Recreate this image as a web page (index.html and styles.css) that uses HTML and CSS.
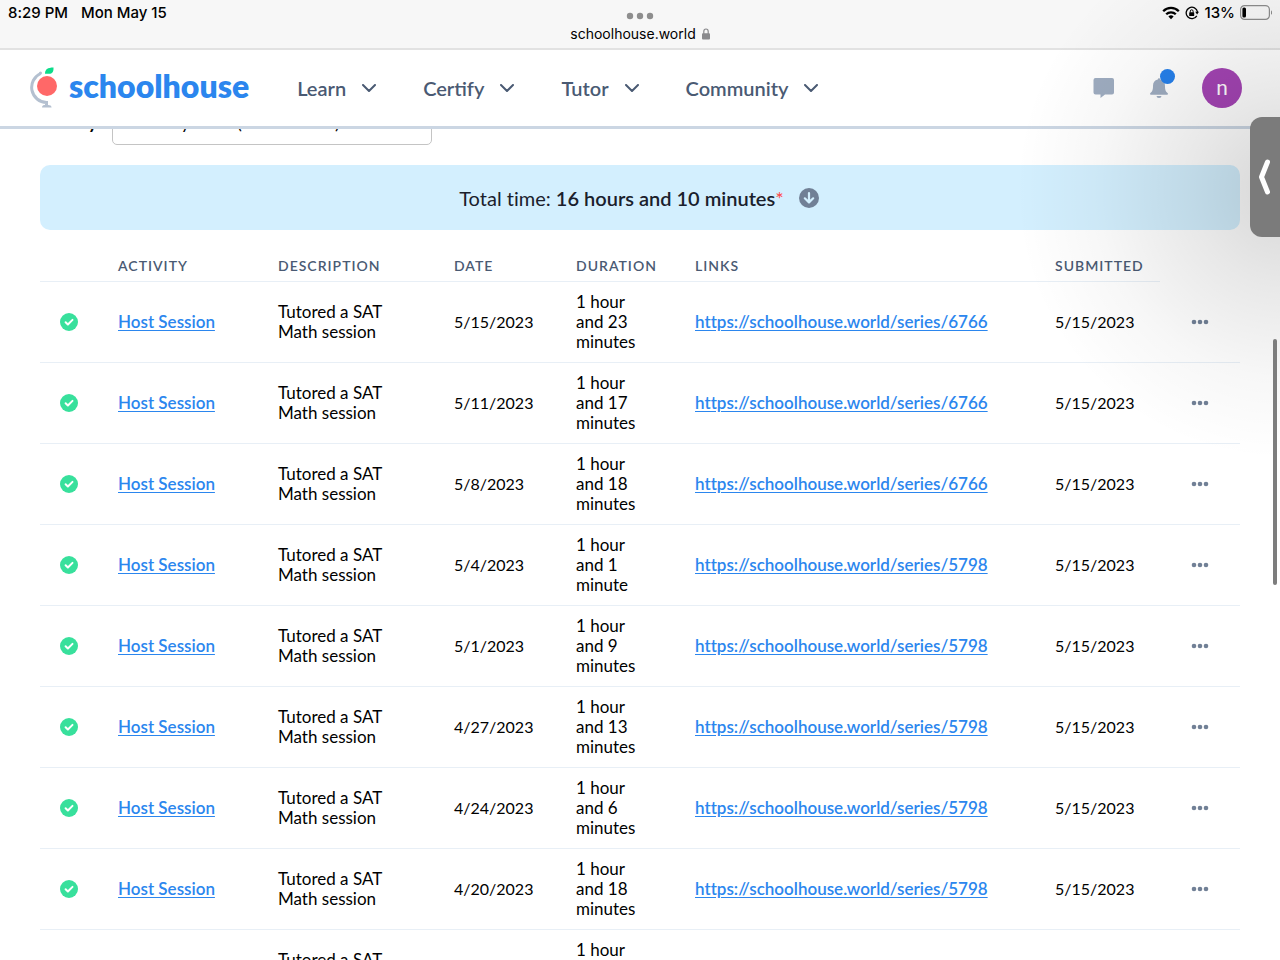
FILE: index.html
```html
<!DOCTYPE html>
<html lang="en">
<head>
    <meta charset="UTF-8">
    <meta name="viewport" content="width=device-width, initial-scale=1.0">
    <title>Schoolhouse - Transcript</title>
    <link rel="stylesheet" href="styles.css">
</head>
<body>
    <div class="status-bar">
        <div class="status-left"><span>8:29 PM</span><span>Mon May 15</span></div>
        <div class="status-center">
            <svg class="multitask" width="28" height="8" viewBox="0 0 28 8" fill="#8e8e8e"><circle cx="4" cy="4" r="3.2"/><circle cx="14" cy="4" r="3.2"/><circle cx="24" cy="4" r="3.2"/></svg>
            <div class="address">
                <span>schoolhouse.world</span>
                <svg width="8" height="12" viewBox="0 0 8 12"><path d="M1.8 6V3.4a2.2 2.4 0 0 1 4.4 0V6" fill="none" stroke="#8a8a8d" stroke-width="1.2"/><rect y="5.2" width="8" height="6.4" rx="1" fill="#8a8a8d"/></svg>
            </div>
        </div>
        <div class="status-right">
            <svg width="18" height="14" viewBox="0 0 18 14" fill="none" stroke="#000" stroke-width="2.3"><path d="M1.2 5.2a11 11 0 0 1 15.6 0"/><path d="M4.2 8.3a6.8 6.8 0 0 1 9.6 0"/><path d="M9 13.2L6.4 10.6a3.7 3.7 0 0 1 5.2 0z" fill="#000" stroke="none"/></svg>
            <svg width="14" height="14" viewBox="0 0 14 14"><path d="M11.8 9.800A5.700 5.700 0 1 1 12.500 6" fill="none" stroke="#000" stroke-width="1.3"/><path d="M10.2 5.8h3.8l-1.9 2.8z"/><rect x="4.2" y="6.3" width="5" height="3.8" rx=".6"/><path d="M5.3 6.6V5.2a1.4 1.4 0 0 1 2.8 0v1.4" fill="none" stroke="#000" stroke-width="1"/></svg>
            <span>13%</span>
            <svg width="32" height="15" viewBox="0 0 32 15"><rect x=".6" y=".6" width="28.8" height="13.8" rx="4" fill="none" stroke="#8d8d8d" stroke-width="1.2"/><rect x="2.4" y="2.4" width="3.6" height="10.2" rx="1.5"/><path d="M31 5.2c1.4.6 1.4 4 0 4.6z" fill="#8d8d8d"/></svg>
        </div>
    </div>

    <header class="navbar">
        <a class="logo" href="#">
            <svg width="28" height="42" viewBox="0 0 28 42">
                <path d="M10.500 6.500A15.200 15.200 0 0 0 16.500 35.500V39" fill="none" stroke="#b4c0d0" stroke-width="3"/>
                <circle cx="10.500" cy="6" r="1.500" fill="#b4c0d0"/>
                <path d="M12 40.500c0-2 1.500-2.500 3-2.500h3c2 0 3.600.8 3.600 2.500z" fill="#b4c0d0"/>
                <circle cx="17" cy="19" r="10" fill="#ff6868"/>
                <path d="M15 6.500C15 2.500 17.500.5 23.500.5c.2 4-1 6.300-4.500 6.300h-4z" fill="#0cdc8a"/>
            </svg>
            <span>schoolhouse</span>
        </a>
        <nav class="menu">
            <button class="menu-item">Learn <svg class="chevron" viewBox="0 0 14 8"><path d="M1 1l6 6 6-6"/></svg></button>
            <button class="menu-item">Certify <svg class="chevron" viewBox="0 0 14 8"><path d="M1 1l6 6 6-6"/></svg></button>
            <button class="menu-item">Tutor <svg class="chevron" viewBox="0 0 14 8"><path d="M1 1l6 6 6-6"/></svg></button>
            <button class="menu-item">Community <svg class="chevron" viewBox="0 0 14 8"><path d="M1 1l6 6 6-6"/></svg></button>
        </nav>
        <div class="user-actions">
            <button class="icon-btn" aria-label="Messages">
                <svg width="22" height="20" viewBox="0 0 22 20"><path d="M2.500 0h16.500a2 2 0 0 1 2 2v12.500a2 2 0 0 1-2 2h-7L7.500 20v-3.500h-5a2 2 0 0 1-2-2V2a2 2 0 0 1 2-2z" fill="#9eacc0"/></svg>
            </button>
            <button class="icon-btn" aria-label="Notifications">
                <svg width="18" height="20" viewBox="0 0 18 20" fill="#9eacc0"><path d="M7.800 1.500a1.200 1.200 0 0 1 2.400 0C13.500 2.200 15 4.500 15 8c0 4.500 1 5.700 2.600 7 .7.700.3 1.800-.6 1.800H1c-.9 0-1.300-1.100-.6-1.800C2 13.700 3 12.500 3 8c0-3.500 1.500-5.800 4.800-6.500z"/><path d="M6.500 18h5a2.500 2 0 0 1-5 0z"/></svg>
                <span class="badge"></span>
            </button>
            <button class="avatar">n</button>
        </div>
    </header>

    <main class="content">
        <div class="sort-row">
            <label for="sort">Sort by</label>
            <select id="sort" class="sort-select">
                <option>Activity Date (newest first)</option>
            </select>
        </div>

        <div class="total-banner">
            <span>Total time: <strong>16 hours and 10 minutes</strong><span class="asterisk">*</span></span>
            <button class="icon-btn" aria-label="Download">
                <svg width="20" height="20" viewBox="0 0 20 20"><circle cx="10" cy="10" r="10" fill="#718096"/><path d="M10 5v9M5.800 10.300L10 14.400l4.200-4.100" fill="none" stroke="#d3effe" stroke-width="2.200" stroke-linecap="round" stroke-linejoin="round"/></svg>
            </button>
        </div>

        <table class="activities">
            <colgroup>
                <col class="col-check"><col class="col-activity"><col class="col-description"><col class="col-date">
                <col class="col-duration"><col class="col-links"><col><col class="col-menu">
            </colgroup>
            <thead>
                <tr>
                    <th></th>
                    <th>Activity</th>
                    <th>Description</th>
                    <th>Date</th>
                    <th>Duration</th>
                    <th>Links</th>
                    <th>Submitted</th>
                </tr>
            </thead>
            <tbody id="rows"></tbody>
        </table>
    </main>

    <div class="edge-shade"></div>
    <button class="side-tab" aria-label="Show window">
        <svg width="12" height="36" viewBox="0 0 12 36"><path d="M9.500 3L3.500 18l6 15" fill="none" stroke="#fff" stroke-width="5" stroke-linecap="round" stroke-linejoin="round"/></svg>
    </button>
    <div class="scroll-thumb"></div>

    <script src="script.js"></script>
</body>
</html>
```
FILE: styles.css
```css
* {
    box-sizing: border-box;
}
body {
    margin: 0;
    height: 100vh;
    display: flex;
    flex-direction: column;
    overflow: hidden;
    position: relative;
    background: #fff;
    color: #000;
    font-family: Lato, "Liberation Sans", sans-serif;
    font-size: 17px;
    line-height: 20px;
    font-variant-ligatures: none;
}
button {
    border: none;
    background: none;
    padding: 0;
    font-family: inherit;
    cursor: pointer;
}
svg {
    display: block;
}

/* device bar */
.status-bar {
    display: grid;
    grid-template-columns: 1fr auto 1fr;
    height: 50px;
    flex-shrink: 0;
    padding: 0 8px;
    background: #f7f7f7;
    border-bottom: 2px solid #e2e2e2;
    font-family: Inter, "Liberation Sans", sans-serif;
    font-size: 14px;
}
.status-left,
.status-right {
    display: flex;
    height: 25px;
    align-items: center;
    font-size: 15px;
    font-weight: 500;
}
.status-left {
    gap: 13px;
}
.status-right {
    justify-content: flex-end;
    gap: 5px;
}
.status-center {
    display: flex;
    flex-direction: column;
    align-items: center;
    padding-top: 12px;
    gap: 4px;
}
.address {
    display: flex;
    align-items: center;
    gap: 6px;
}

/* navbar */
.navbar {
    display: flex;
    align-items: center;
    height: 79px;
    flex-shrink: 0;
    padding: 0 38px 0 30px;
    border-bottom: 3px solid #cbd6e3;
}
.logo {
    display: flex;
    align-items: center;
    gap: 11px;
    color: #2b86ee;
    font-size: 32px;
    line-height: 36px;
    font-weight: 800;
    text-decoration: none;
}
.logo span {
    padding-bottom: 4px;
}
.menu {
    display: flex;
    gap: 47px;
    margin-left: 48px;
}
.menu-item {
    display: flex;
    align-items: center;
    gap: 16px;
    color: #4a5a73;
    font-size: 20px;
    line-height: 24px;
    font-weight: 600;
}
.chevron {
    width: 14px;
    height: 8px;
    fill: none;
    stroke: #4a5a73;
    stroke-width: 2;
    stroke-linecap: round;
    stroke-linejoin: round;
}
.user-actions {
    display: flex;
    align-items: center;
    gap: 31px;
    margin-left: auto;
}
.icon-btn {
    display: flex;
    justify-content: center;
    position: relative;
    width: 24px;
}
.badge {
    position: absolute;
    top: -9px;
    right: -4px;
    width: 15px;
    height: 15px;
    border-radius: 50%;
    background: #2680eb;
}
.avatar {
    width: 40px;
    height: 40px;
    border-radius: 50%;
    background: #a444b4;
    color: #fff;
    font-family: Roboto, sans-serif;
    font-size: 21px;
}

/* content */
.content {
    flex: 1;
    min-height: 0;
    overflow: hidden;
    padding: 0 40px;
}
.sort-row {
    display: flex;
    align-items: center;
    gap: 15px;
    margin-top: -30px;
    margin-bottom: 20px;
    font-size: 18px;
}
.sort-row label {
    font-weight: 700;
}
.sort-select {
    appearance: none;
    width: 320px;
    height: 46px;
    padding: 0 16px;
    border: 1px solid #c4c4c4;
    border-radius: 5px;
    background: #fff;
    color: #000;
    font: inherit;
}
.total-banner {
    display: flex;
    justify-content: center;
    align-items: center;
    gap: 13px;
    height: 65px;
    border-radius: 10px;
    background: #d3effe;
    color: #1a202c;
    font-size: 20px;
    line-height: 24px;
}
.total-banner strong {
    font-weight: 600;
}
.asterisk {
    color: #ff4545;
}

/* activities table */
.activities {
    width: 100%;
    table-layout: fixed;
    border-spacing: 0;
    margin-top: 22px;
}
.col-check { width: 58px; }
.col-activity { width: 160px; }
.col-description { width: 176px; }
.col-date { width: 122px; }
.col-duration { width: 119px; }
.col-links { width: 360px; }
.col-menu { width: 80px; }
.activities th {
    height: 30px;
    padding: 0 0 1px 20px;
    border-bottom: 1px solid #e8eff6;
    color: #4a5a73;
    font-size: 14px;
    font-weight: 600;
    letter-spacing: 1px;
    text-align: left;
    text-transform: uppercase;
}
.activities td {
    padding: 10px 0 10px 20px;
    border-bottom: 1px solid #e8eff6;
}
.activities a {
    color: #2b86ee;
    font-weight: 600;
    text-underline-offset: 2px;
}
.activities .date {
    font-size: 16px;
}
.activities .description,
.activities .duration {
    padding-right: 40px;
}
.activities .menu-cell {
    padding: 0 28px;
}

/* overlays on the right edge */
.edge-shade {
    position: absolute;
    top: 0;
    right: 0;
    width: 270px;
    height: 470px;
    background: radial-gradient(circle 270px at 275px 190px, rgba(0, 0, 0, 0.16), rgba(0, 0, 0, 0.09) 35%, rgba(0, 0, 0, 0.03) 70%, transparent);
    pointer-events: none;
}
.side-tab {
    position: absolute;
    top: 117px;
    right: 0;
    width: 30px;
    height: 120px;
    padding-left: 8px;
    border-radius: 12px 0 0 12px;
    background: #7b7b7b;
}
.scroll-thumb {
    position: absolute;
    top: 339px;
    right: 3px;
    width: 4px;
    height: 246px;
    border-radius: 2px;
    background: #7d7d7d;
}
```
FILE: script.js
```js
const activities = [
    { date: "5/15/2023", duration: "1 hour and 23 minutes", series: 6766 },
    { date: "5/11/2023", duration: "1 hour and 17 minutes", series: 6766 },
    { date: "5/8/2023", duration: "1 hour and 18 minutes", series: 6766 },
    { date: "5/4/2023", duration: "1 hour and 1 minute", series: 5798 },
    { date: "5/1/2023", duration: "1 hour and 9 minutes", series: 5798 },
    { date: "4/27/2023", duration: "1 hour and 13 minutes", series: 5798 },
    { date: "4/24/2023", duration: "1 hour and 6 minutes", series: 5798 },
    { date: "4/20/2023", duration: "1 hour and 18 minutes", series: 5798 },
    { date: "4/17/2023", duration: "1 hour and 10 minutes", series: 5798 }
];

document.getElementById("rows").innerHTML = activities.map(a => `
    <tr>
        <td><svg width="18" height="18" viewBox="0 0 18 18"><circle cx="9" cy="9" r="9" fill="#38e09c"/><path d="M5.600 9.200l2.300 2.300 4.600-4.600" fill="none" stroke="#fff" stroke-width="2" stroke-linecap="round" stroke-linejoin="round"/></svg></td>
        <td><a href="#">Host Session</a></td>
        <td class="description">Tutored a SAT Math session</td>
        <td class="date">${a.date}</td>
        <td class="duration">${a.duration}</td>
        <td><a href="#">https://schoolhouse.world/series/${a.series}</a></td>
        <td class="date">5/15/2023</td>
        <td class="menu-cell"><button class="icon-btn" aria-label="More"><svg width="18" height="6" viewBox="0 0 18 6" fill="#718096"><circle cx="3" cy="3" r="2.300"/><circle cx="9" cy="3" r="2.300"/><circle cx="15" cy="3" r="2.300"/></svg></button></td>
    </tr>`).join("");
```
